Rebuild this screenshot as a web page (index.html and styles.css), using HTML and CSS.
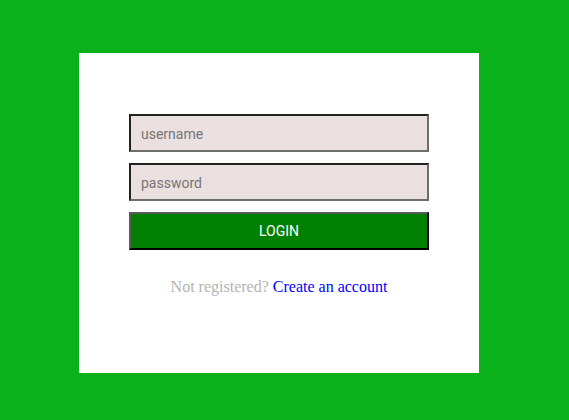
FILE: index.html
```html
<!DOCTYPE html>
<html>
<head>
<meta charset="utf-8">
<link rel="stylesheet" href="styles.css">
</head>
<body>
<div class="card">
  <form class="form">
    <input class="field" type="text" placeholder="username">
    <input class="field" type="password" placeholder="password">
    <button class="btn" type="button">login</button>
    <p class="message">Not registered? <a href="#">Create an account</a></p>
  </form>
</div>
</body>
</html>
```
FILE: styles.css
```css
html, body {
  margin: 0;
  padding: 0;
  background: #0bb11a;
  height: 100%;
}
.card {
  margin: 53px 0 0 79px;
  width: 400px;
  height: 320px;
  background: #ffffff;
  box-sizing: border-box;
  padding: 61px 50px 0;
}
.form {
  display: flex;
  flex-direction: column;
  gap: 11px;
  margin: 0;
}
.field {
  display: block;
  width: 300px;
  height: 38px;
  box-sizing: border-box;
  margin: 0;
  padding: 1px 10px 0;
  background: #ebe0e0;
  border: 2px solid;
  border-color: #222222 #6d6d6d #6d6d6d #222222;
  font-family: Roboto, "Liberation Sans", sans-serif;
  font-size: 14px;
  color: #333;
  outline: 0;
}
.field::placeholder {
  color: #757575;
}
.btn {
  display: block;
  width: 300px;
  height: 38px;
  box-sizing: border-box;
  margin: 0;
  padding: 0;
  background: #008000;
  border: 2px solid;
  border-color: #5a5a5a #000000 #000000 #5a5a5a;
  color: #ffffff;
  font-family: Roboto, "Liberation Sans", sans-serif;
  font-size: 14px;
  text-transform: uppercase;
}
.message {
  margin: 17px 0 0;
  text-align: center;
  font-family: "Liberation Serif", serif;
  font-size: 16px;
  color: #b3b3b3;
}
.message a {
  color: #0000ff;
  text-decoration: none;
}
```
